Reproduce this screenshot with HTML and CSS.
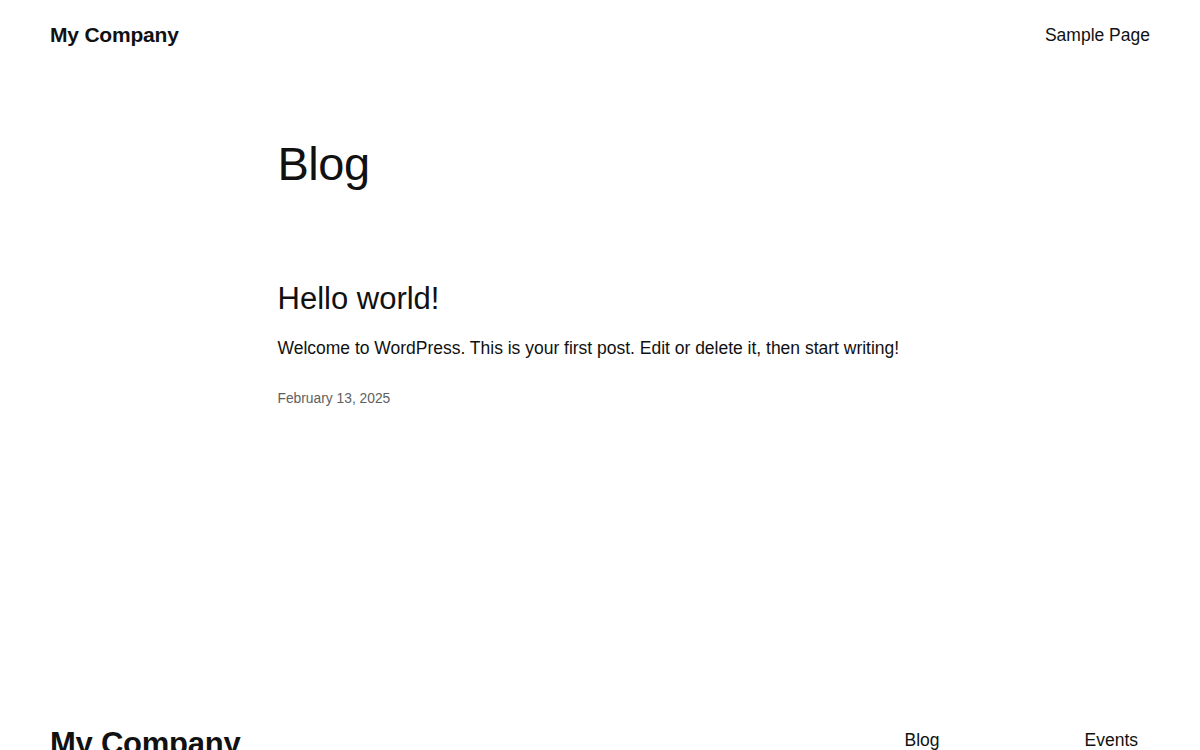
FILE: index.html
```html
<!DOCTYPE html>
<html lang="en">
<head>
<meta charset="utf-8">
<title>Blog – My Company</title>
<link rel="stylesheet" href="styles.css">
</head>
<body>
<header class="site-header">
  <a class="site-title" href="#">My Company</a>
  <nav class="header-nav"><a href="#">Sample Page</a></nav>
</header>
<main class="content">
  <h1 class="page-title">Blog</h1>
  <article class="post">
    <h2 class="post-title">Hello world!</h2>
    <p class="post-excerpt">Welcome to WordPress. This is your first post. Edit or delete it, then start writing!</p>
    <div class="post-date">February 13, 2025</div>
  </article>
</main>
<footer class="site-footer">
  <a class="footer-title" href="#">My Company</a>
  <nav class="footer-nav">
    <a href="#">Blog</a>
    <a href="#">Events</a>
  </nav>
</footer>
</body>
</html>
```
FILE: styles.css
```css
html, body {
  margin: 0;
  padding: 0;
  background: #ffffff;
}
body {
  font-family: "Liberation Sans", Arial, sans-serif;
  color: #111111;
}
a {
  color: inherit;
  text-decoration: none;
}
.site-header {
  display: flex;
  justify-content: space-between;
  align-items: center;
  height: 70px;
  padding: 0 50px;
}
.site-title {
  font-size: 21px;
  font-weight: 700;
  letter-spacing: -0.2px;
}
.header-nav a {
  font-size: 17.5px;
}
.content {
  width: 645px;
  margin: 0 auto;
  height: 620px;
}
.page-title {
  margin: 0;
  padding-top: 66px;
  font-size: 47px;
  font-weight: 400;
  line-height: 1.2;
  letter-spacing: -0.5px;
}
.post {
  padding-top: 88px;
}
.post-title {
  margin: 0;
  font-size: 31px;
  font-weight: 400;
  line-height: 1.2;
}
.post-excerpt {
  margin: 17px 0 0;
  font-size: 17.5px;
  line-height: 1.5;
  letter-spacing: -0.01px;
}
.post-date {
  margin-top: 30px;
  font-size: 13.8px;
  color: #606060;
}
.site-footer {
  display: flex;
  justify-content: space-between;
  align-items: flex-start;
  padding: 36px 50px 0 50px;
}
.footer-title {
  font-size: 31px;
  font-weight: 700;
  letter-spacing: -0.25px;
}
.footer-nav {
  display: flex;
  gap: 145px;
  padding-right: 12px;
  padding-top: 4px;
}
.footer-nav a {
  font-size: 17.5px;
}
```
